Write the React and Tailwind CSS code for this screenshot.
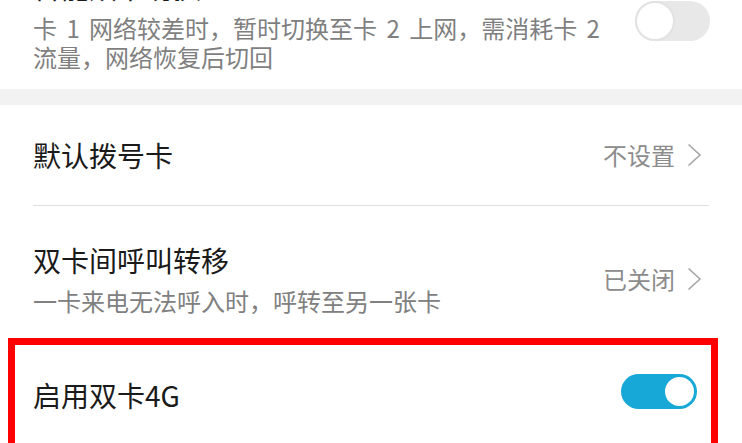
import React from 'react';

const Chevron = () => (
  <svg width="15" height="24" viewBox="0 0 15 24" className="ml-[12px]">
    <polyline points="1.5,1.5 13,12 1.5,22.5" fill="none" stroke="#a6a6a6" strokeWidth="1.6" />
  </svg>
);

function Toggle({ on }) {
  if (on) {
    return (
      <div className="w-[76px] h-[35px] rounded-full bg-[#17a8d8] p-[3px] flex justify-end">
        <div className="w-[29px] h-[29px] rounded-full bg-white" />
      </div>
    );
  }
  return (
    <div className="w-[75px] h-[40px] rounded-full bg-[#e8e8e8] flex items-center">
      <div className="w-[40px] h-[40px] rounded-full bg-white border-[2px] border-[#e2e2e2]" />
    </div>
  );
}

function Row({ title, value }) {
  return (
    <div className="h-[100px] flex items-center justify-between pl-[33px] pr-[40px]">
      <div className="text-[28px] leading-[36px] text-[#1a1a1a]">{title}</div>
      <div className="flex items-center text-[24px] text-[#8c8c8c]">
        {value}
        <Chevron />
      </div>
    </div>
  );
}

export default function App() {
  return (
    <div
      className="relative w-[742px] h-[443px] overflow-hidden bg-white"
      style={{ fontFamily: '"Noto Sans CJK SC", "Noto Sans", sans-serif' }}
    >
      {/* smart data switch (cut at top) */}
      <div className="h-[89px] flex justify-between pl-[33px] pr-[32px]">
        <div className="w-[585px]">
          <div className="text-[28px] leading-[36px] text-[#1a1a1a] mt-[-31px]">智能双卡切换</div>
          <div className="text-[24px] leading-[29px] text-[#7f7f7f] mt-[8px] [word-spacing:4px]">
            卡 1 网络较差时，暂时切换至卡 2 上网，需消耗卡 2
            <br />
            流量，网络恢复后切回
          </div>
        </div>
        <div className="mt-[1px]">
          <Toggle on={false} />
        </div>
      </div>

      <div className="h-[16px] bg-[#f2f2f2]" />

      <Row title="默认拨号卡" value="不设置" />
      <div className="mx-[33px] h-px bg-[#dedede]" />

      <div className="h-[145px] flex items-center justify-between pl-[33px] pr-[40px]">
        <div>
          <div className="text-[28px] leading-[36px] text-[#1a1a1a]">双卡间呼叫转移</div>
          <div className="text-[24px] leading-[30px] text-[#808080] mt-[8px]">一卡来电无法呼入时，呼转至另一张卡</div>
        </div>
        <div className="flex items-center text-[24px] text-[#8c8c8c]">
          已关闭
          <Chevron />
        </div>
      </div>

      <div className="h-[88px] flex items-center justify-between pl-[33px] pr-[45px]">
        <div className="text-[28px] leading-[36px] text-[#1a1a1a]">启用双卡4G</div>
        <div className="mb-[8px]">
          <Toggle on />
        </div>
      </div>

      {/* red highlight annotation */}
      <div className="absolute left-[8px] top-[338px] w-[710px] h-[130px] border-[7px] border-[#ff0000]" />
    </div>
  );
}
